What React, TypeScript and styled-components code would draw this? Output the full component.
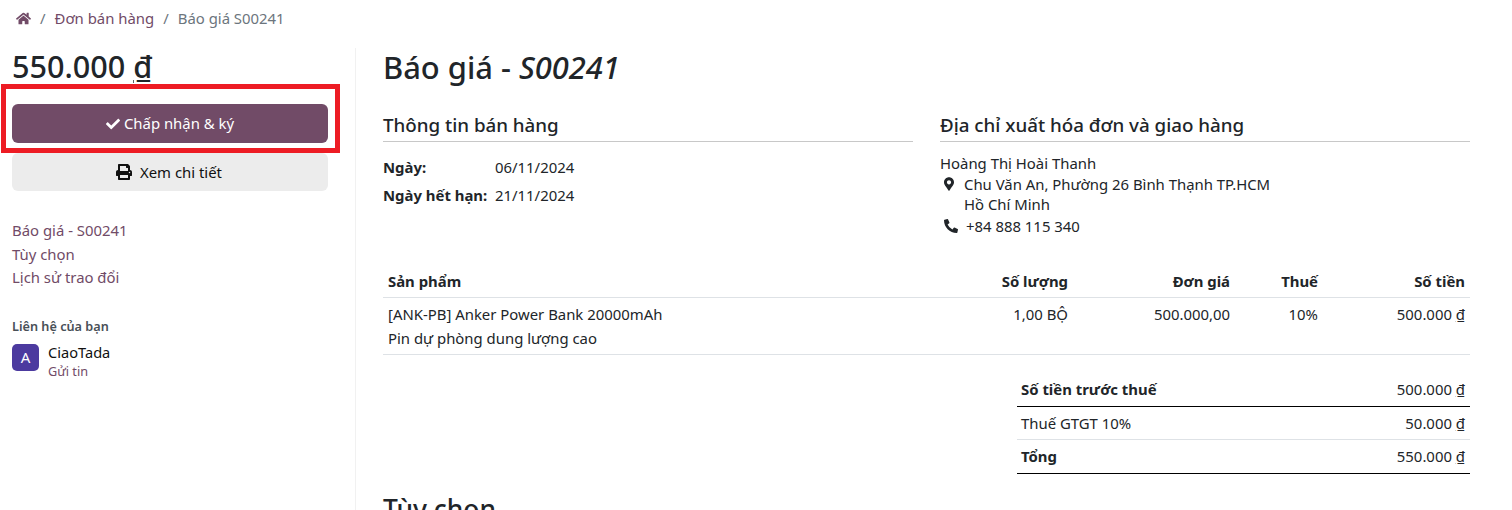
import React from "react";
import styled, { createGlobalStyle } from "styled-components";
import { FaHome, FaCheck, FaPrint, FaMapMarkerAlt, FaPhoneAlt } from "react-icons/fa";

const Global = createGlobalStyle`
    html, body {
        margin: 0;
        height: 510px;
        overflow: hidden;
        background: #fff;
    }
    body {
        font-family: "Noto Sans", "Open Sans", sans-serif;
        font-size: 14.9px;
        line-height: 21px;
        color: #212529;
    }
`;

const Currency = () => <u>₫</u>;

export default function App() {
    return (
        <Page>
            <Global />
            <Breadcrumb>
                <Crumb><FaHome /></Crumb>
                <Slash>/</Slash>
                <Crumb>Đơn bán hàng</Crumb>
                <Slash>/</Slash>
                <Current>Báo giá S00241</Current>
            </Breadcrumb>
            <Body>
                <Sidebar>
                    <Price>550.000 <Currency /></Price>
                    <PrimaryButton>
                        <FaCheck /> Chấp nhận &amp; ký
                    </PrimaryButton>
                    <SecondaryButton>
                        <FaPrint /> Xem chi tiết
                    </SecondaryButton>
                    <Nav>
                        <NavLink>Báo giá - S00241</NavLink>
                        <NavLink>Tùy chọn</NavLink>
                        <NavLink>Lịch sử trao đổi</NavLink>
                    </Nav>
                    <ContactTitle>Liên hệ của bạn</ContactTitle>
                    <Contact>
                        <Avatar>A</Avatar>
                        <div>
                            <ContactName>CiaoTada</ContactName>
                            <ContactLink>Gửi tin</ContactLink>
                        </div>
                    </Contact>
                </Sidebar>
                <Main>
                    <Title>Báo giá - <em>S00241</em></Title>
                    <InfoGrid>
                        <section>
                            <SectionTitle>Thông tin bán hàng</SectionTitle>
                            <DateRow><b>Ngày:</b><span>06/11/2024</span></DateRow>
                            <DateRow><b>Ngày hết hạn:</b><span>21/11/2024</span></DateRow>
                        </section>
                        <section>
                            <SectionTitle>Địa chỉ xuất hóa đơn và giao hàng</SectionTitle>
                            <Address>
                                <div>Hoàng Thị Hoài Thanh</div>
                                <AddressRow>
                                    <FaMapMarkerAlt />
                                    <div>
                                        Chu Văn An, Phường 26 Bình Thạnh TP.HCM
                                        <br />
                                        Hồ Chí Minh
                                    </div>
                                </AddressRow>
                                <AddressRow $phone>
                                    <FaPhoneAlt />
                                    <div>+84 888 115 340</div>
                                </AddressRow>
                            </Address>
                        </section>
                    </InfoGrid>
                    <Lines>
                        <colgroup>
                            <Col $w={560} />
                            <Col $w={130} />
                            <Col $w={162} />
                            <Col $w={88} />
                            <Col $w={147} />
                        </colgroup>
                        <thead>
                            <tr>
                                <th>Sản phẩm</th>
                                <th>Số lượng</th>
                                <th>Đơn giá</th>
                                <th>Thuế</th>
                                <th>Số tiền</th>
                            </tr>
                        </thead>
                        <tbody>
                            <tr>
                                <td>
                                    [ANK-PB] Anker Power Bank 20000mAh
                                    <br />
                                    Pin dự phòng dung lượng cao
                                </td>
                                <td>1,00 BỘ</td>
                                <td>500.000,00</td>
                                <td>10%</td>
                                <td>500.000 <Currency /></td>
                            </tr>
                        </tbody>
                    </Lines>
                    <Totals>
                        <SummaryRow $line="#000">
                            <b>Số tiền trước thuế</b>
                            <span>500.000 <Currency /></span>
                        </SummaryRow>
                        <SummaryRow $line="#dee2e6">
                            <span>Thuế GTGT 10%</span>
                            <span>50.000 <Currency /></span>
                        </SummaryRow>
                        <SummaryRow $line="#000">
                            <b>Tổng</b>
                            <span>550.000 <Currency /></span>
                        </SummaryRow>
                    </Totals>
                    <Options>Tùy chọn</Options>
                </Main>
            </Body>
            <Highlight />
        </Page>
    );
}

const Page = styled.div`
    position: relative;
    width: 1512px;
    height: 510px;
    overflow: hidden;
`;

const Breadcrumb = styled.nav`
    display: flex;
    align-items: center;
    height: 36px;
    padding-left: 16px;
    box-sizing: border-box;
`;

const Crumb = styled.a`
    display: flex;
    align-items: center;
    color: #714b67;
    svg {
        font-size: 15px;
    }
`;

const Slash = styled.span`
    margin: 0 9px;
    color: #6c757d;
`;

const Current = styled.span`
    color: #6c757d;
`;

const Body = styled.div`
    display: flex;
    margin-top: 12px;
    padding-left: 12px;
`;

const Sidebar = styled.aside`
    width: 316px;
    padding-right: 27px;
    border-right: 1px solid #f1f1f1;
    height: 470px;
    flex: none;
`;

const Price = styled.div`
    font-size: 30.6px;
    line-height: 37px;
    font-weight: 500;
    margin-bottom: 19px;
`;

const PrimaryButton = styled.button`
    display: flex;
    align-items: center;
    justify-content: center;
    gap: 4px;
    width: 100%;
    height: 39px;
    border: 0;
    border-radius: 6px;
    background: #714b67;
    color: #fff;
    font: inherit;
    svg {
        font-size: 14px;
    }
`;

const SecondaryButton = styled(PrimaryButton)`
    height: 38px;
    margin-top: 10px;
    gap: 8px;
    padding-right: 8px;
    background: #ececec;
    color: #111;
    svg {
        font-size: 16px;
    }
`;

const Nav = styled.div`
    display: flex;
    flex-direction: column;
    margin-top: 28px;
`;

const NavLink = styled.a`
    color: #714b67;
    line-height: 23.5px;
`;

const ContactTitle = styled.div`
    margin-top: 27px;
    font-size: 12.7px;
    line-height: 18px;
    font-weight: 600;
    color: #495057;
`;

const Contact = styled.div`
    display: flex;
    gap: 9px;
    margin-top: 9px;
`;

const Avatar = styled.div`
    display: flex;
    align-items: center;
    justify-content: center;
    width: 27px;
    height: 27px;
    border-radius: 5px;
    background: #4c3a9f;
    color: #fff;
    font-size: 15px;
`;

const ContactName = styled.div`
    font-size: 14.6px;
    line-height: 17px;
    color: #111;
`;

const ContactLink = styled.a`
    display: block;
    font-size: 12.7px;
    line-height: 20px;
    color: #714b67;
`;

const Main = styled.main`
    width: 1087px;
    margin-left: 27px;
    flex: none;
`;

const Title = styled.h1`
    margin: 0;
    font-size: 30.9px;
    line-height: 38px;
    font-weight: 500;
`;

const InfoGrid = styled.div`
    display: grid;
    grid-template-columns: 530px 530px;
    column-gap: 27px;
    margin-top: 27px;
    height: 153px;
`;

const SectionTitle = styled.h5`
    margin: 0 0 11px;
    padding-bottom: 4px;
    border-bottom: 1px solid #c8c8c8;
    font-size: 18.75px;
    line-height: 24px;
    font-weight: 500;
`;

const DateRow = styled.div`
    display: grid;
    grid-template-columns: 112px 1fr;
    line-height: 28px;
    b {
        font-weight: 700;
    }
`;

const Address = styled.address`
    font-style: normal;
    line-height: 20.5px;
`;

const AddressRow = styled.div<{ $phone?: boolean }>`
    display: flex;
    gap: ${(p) => (p.$phone ? "8px" : "10px")};
    padding-left: 4px;
    margin-top: ${(p) => (p.$phone ? "1px" : "0")};
    svg {
        flex: none;
        font-size: 14px;
        width: ${(p) => (p.$phone ? "14px" : "10px")};
        margin-top: 3px;
    }
`;

const Lines = styled.table`
    width: 1087px;
    table-layout: fixed;
    border-collapse: collapse;
    th,
    td {
        padding: 5px;
        text-align: right;
        vertical-align: top;
        border-bottom: 1px solid #dee2e6;
    }
    th:first-child,
    td:first-child {
        text-align: left;
    }
    th {
        font-weight: 700;
        height: 21px;
    }
    td {
        line-height: 23.5px;
        padding: 5px 5px 4px;
    }
`;

const Col = styled.col<{ $w: number }>`
    width: ${(p) => p.$w}px;
`;

const Totals = styled.div`
    width: 453px;
    margin: 18px 0 0 auto;
`;

const SummaryRow = styled.div<{ $line: string }>`
    display: flex;
    justify-content: space-between;
    align-items: center;
    height: 32.5px;
    padding: 1px 5px 0 4px;
    box-sizing: content-box;
    height: 31.5px;
    border-bottom: 1px solid ${(p) => p.$line};
    b {
        font-weight: 700;
    }
`;

const Options = styled.h3`
    margin: 19px 0 0;
    font-size: 26.4px;
    line-height: 32px;
    font-weight: 500;
`;

const Highlight = styled.div`
    position: absolute;
    left: 1px;
    top: 84px;
    width: 339px;
    height: 69px;
    box-sizing: border-box;
    border: 5px solid #ed1c24;
    pointer-events: none;
`;
